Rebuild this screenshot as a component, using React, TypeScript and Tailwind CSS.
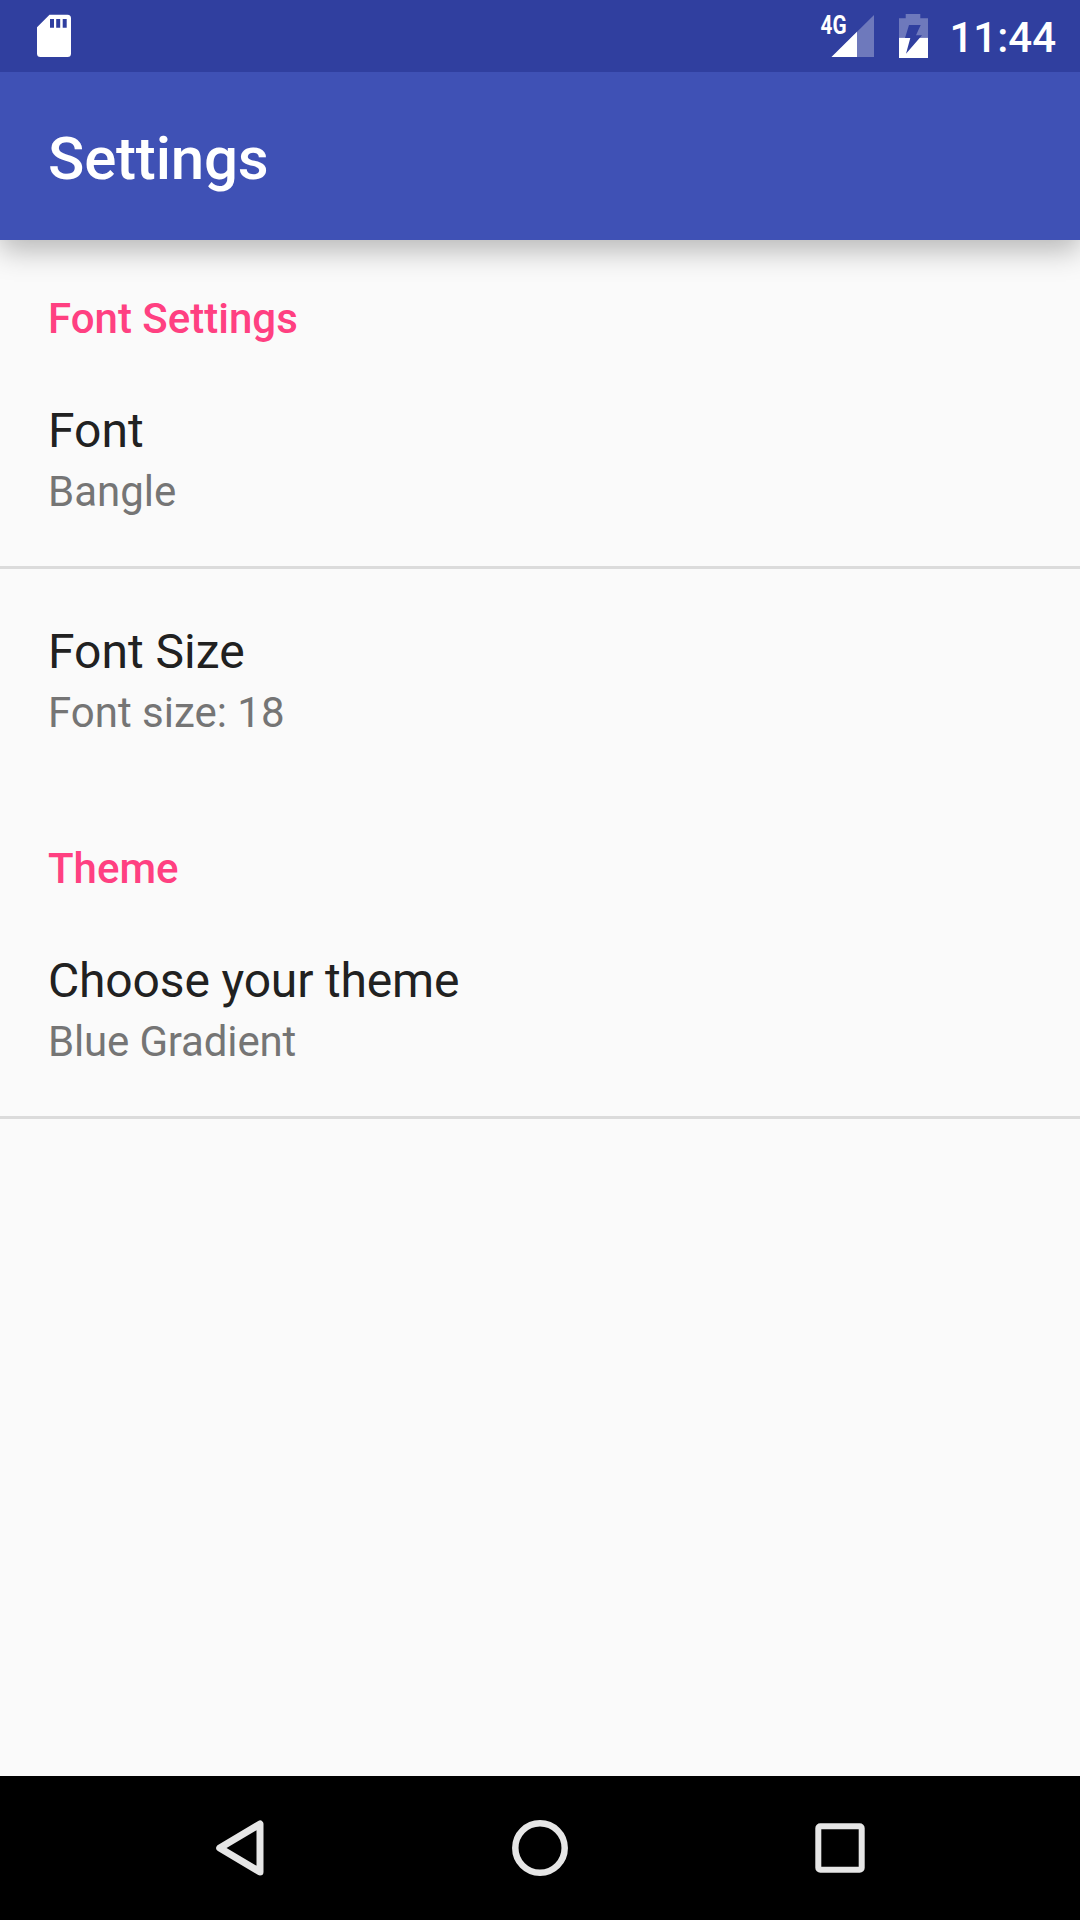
import { ReactNode } from 'react';
import clsx from 'clsx';

interface PreferenceProps {
  title: string;
  summary: string;
  className?: string;
}

function Preference({ title, summary, className }: PreferenceProps) {
  return (
    <div className={clsx('h-[218px] px-12 pt-[55px]', className)}>
      <div className="text-[48px] leading-[56px] text-[#212121]">{title}</div>
      <div className="mt-[5px] text-[42px] leading-[56px] text-[#757575]">{summary}</div>
    </div>
  );
}

function Category({ children }: { children: ReactNode }) {
  return (
    <h2 className="h-[108px] px-12 pt-[54px] text-[42px] leading-[50px] font-medium text-[#ff4081]">
      {children}
    </h2>
  );
}

function Divider() {
  return <div className="h-[3px] bg-[#dbdbdb]" />;
}

function StatusBar() {
  return (
    <div className="relative z-10 flex h-[72px] items-center bg-[#303f9f] pl-[36px] pr-[24px] text-white">
      {/* sd card */}
      <svg width="36" height="44" viewBox="0 0 36 44">
        <path
          fill="#fff"
          fillRule="evenodd"
          d="M13.500 .7H31.500a3.500 3.500 0 0 1 3.500 3.500V39.500a3.500 3.500 0 0 1-3.500 3.500H4.500a3.500 3.500 0 0 1-3.500-3.500V13.200ZM14 5v8.800h4V5ZM20.200 5v8.800h4V5ZM26.700 5v8.800h4V5Z"
        />
      </svg>
      <div className="ml-auto flex items-center">
        {/* signal */}
        <svg width="60" height="60" viewBox="814 6 60 60">
          <path fill="#fff" fillOpacity=".3" d="M874 15V57H831.500Z" />
          <path fill="#fff" d="M857 31.800V57H831.500Z" />
          <text
            x="820.500"
            y="33.500"
            fill="#fff"
            fontSize="26"
            fontWeight="700"
            textLength="26"
            lengthAdjust="spacingAndGlyphs"
          >
            4G
          </text>
        </svg>
        {/* battery */}
        <svg className="ml-[24px]" width="30" height="44" viewBox="898 14 30 44">
          <path fill="#fff" fillOpacity=".3" d="M905.700 14h14.600v4.300h7.700v19.500h-29v-19.500h6.700Z" />
          <path fill="#fff" d="M899 37.800h29V58h-29Z" />
          <path fill="#303f9f" d="M909 25h11.700l-4.700 10.300h6L906 53.700l4.300-15.700h-5.300Z" />
        </svg>
        <span className="relative top-[2px] ml-[21px] text-[42px] leading-[72px] font-medium">11:44</span>
      </div>
    </div>
  );
}

function NavBar() {
  return (
    <nav className="flex h-[144px] items-center justify-center gap-[200px] bg-black">
      <svg width="100" height="100" viewBox="0 0 100 100" fill="none" stroke="#e6e6e6" strokeWidth="6">
        <path d="M70 26V74L29.700 50Z" strokeWidth="7" strokeLinejoin="round" />
      </svg>
      <svg width="100" height="100" viewBox="0 0 100 100" fill="none" stroke="#e6e6e6" strokeWidth="6.500">
        <circle cx="50" cy="50" r="24.700" />
      </svg>
      <svg width="100" height="100" viewBox="0 0 100 100" fill="none" stroke="#e6e6e6" strokeWidth="6">
        <rect x="28.300" y="28.300" width="43.400" height="43.400" rx="2" />
      </svg>
    </nav>
  );
}

export default function App() {
  return (
    <div className="flex h-[1920px] w-[1080px] flex-col overflow-hidden bg-[#fafafa] font-['Roboto',sans-serif]">
      <StatusBar />
      <header className="flex h-[168px] items-center bg-[#3f51b5] px-12 pt-[6px] shadow-[0_10px_28px_rgba(0,0,0,0.28)]">
        <h1 className="text-[60px] font-medium tracking-[-0.2px] text-white">Settings</h1>
      </header>
      <main className="flex-1">
        <Category>Font Settings</Category>
        <Preference title="Font" summary="Bangle" />
        <Divider />
        <Preference title="Font Size" summary="Font size: 18" />
        <div className="mt-[3px]">
          <Category>Theme</Category>
          <Preference title="Choose your theme" summary="Blue Gradient" className="tracking-[-0.16px]" />
          <Divider />
        </div>
      </main>
      <NavBar />
    </div>
  );
}
